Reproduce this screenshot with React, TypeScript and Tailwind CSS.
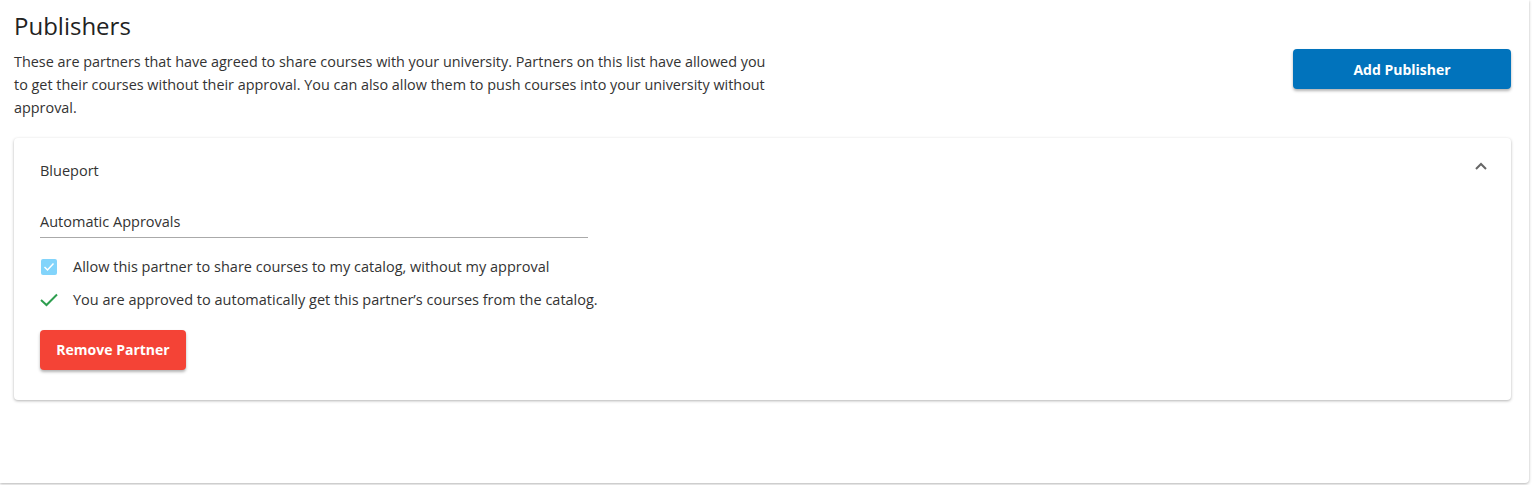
import React from "react";

export default function App() {
  return (
    <div className="w-[1533px] h-[485px] bg-white" style={{ fontFamily: '"Open Sans", "Noto Sans", sans-serif' }}>
      <div className="w-[1529px] h-[483px] bg-white rounded-br-[4px] shadow-[0_1px_3px_rgba(0,0,0,0.3)] px-[14px] pt-[10px]">
        <div className="w-[1497px] flex justify-between">
          <div className="w-[760px]">
            <h1 className="text-[24px] leading-[32px] text-[#222]">Publishers</h1>
            <p className="text-[14.4px] leading-[23px] text-[#333] mt-[8px]">
              These are partners that have agreed to share courses with your university. Partners on this list have allowed you to get their courses without their approval. You can also allow them to push courses into your university without approval.
            </p>
          </div>
          <button className="mt-[39px] w-[218px] h-[40px] rounded-[4px] bg-[#0173bc] text-white text-[14px] font-bold shadow-[0_2px_3px_rgba(0,0,0,0.3)]">
            Add Publisher
          </button>
        </div>
        <div className="mt-[19px] w-[1497px] bg-white rounded-[4px] shadow-[0_1px_3px_rgba(0,0,0,0.3)] px-[26px] pt-[22px] pb-[30px]">
          <div className="flex justify-between items-center">
            <span className="text-[14.5px] text-[#333]">Blueport</span>
            <svg width="14" height="9" viewBox="0 0 14 9" className="mr-[-3px] mt-[-9px]">
              <path d="M2 7 L7 2 L12 7" stroke="#666" strokeWidth="2" fill="none" />
            </svg>
          </div>
          <div className="mt-[29px] w-[548px] border-b border-[#aaa] pb-[4px] text-[14.5px] text-[#333]">
            Automatic Approvals
          </div>
          <div className="mt-[19px] flex items-center h-[20px]">
            <div className="w-[16px] h-[16px] rounded-[2px] bg-[#82d4fb] flex items-center justify-center ml-[1px]">
              <svg width="12" height="10" viewBox="0 0 12 10">
                <path d="M1.5 5 L4.5 8 L10.5 1.5" stroke="white" strokeWidth="1.5" fill="none" />
              </svg>
            </div>
            <span className="ml-[16px] text-[14.5px] text-[#333]">Allow this partner to share courses to my catalog, without my approval</span>
          </div>
          <div className="mt-[13px] flex items-center h-[20px]">
            <svg width="18" height="14" viewBox="0 0 18 14">
              <path d="M1 7 L6.5 12 L17 1.5" stroke="#2e9e4f" strokeWidth="2" fill="none" />
            </svg>
            <span className="ml-[15px] text-[14.5px] text-[#333]">You are approved to automatically get this partner’s courses from the catalog.</span>
          </div>
          <button className="mt-[20px] w-[146px] h-[40px] rounded-[4px] bg-[#f44336] text-white text-[14px] font-bold shadow-[0_2px_3px_rgba(0,0,0,0.3)]">
            Remove Partner
          </button>
        </div>
      </div>
    </div>
  );
}
